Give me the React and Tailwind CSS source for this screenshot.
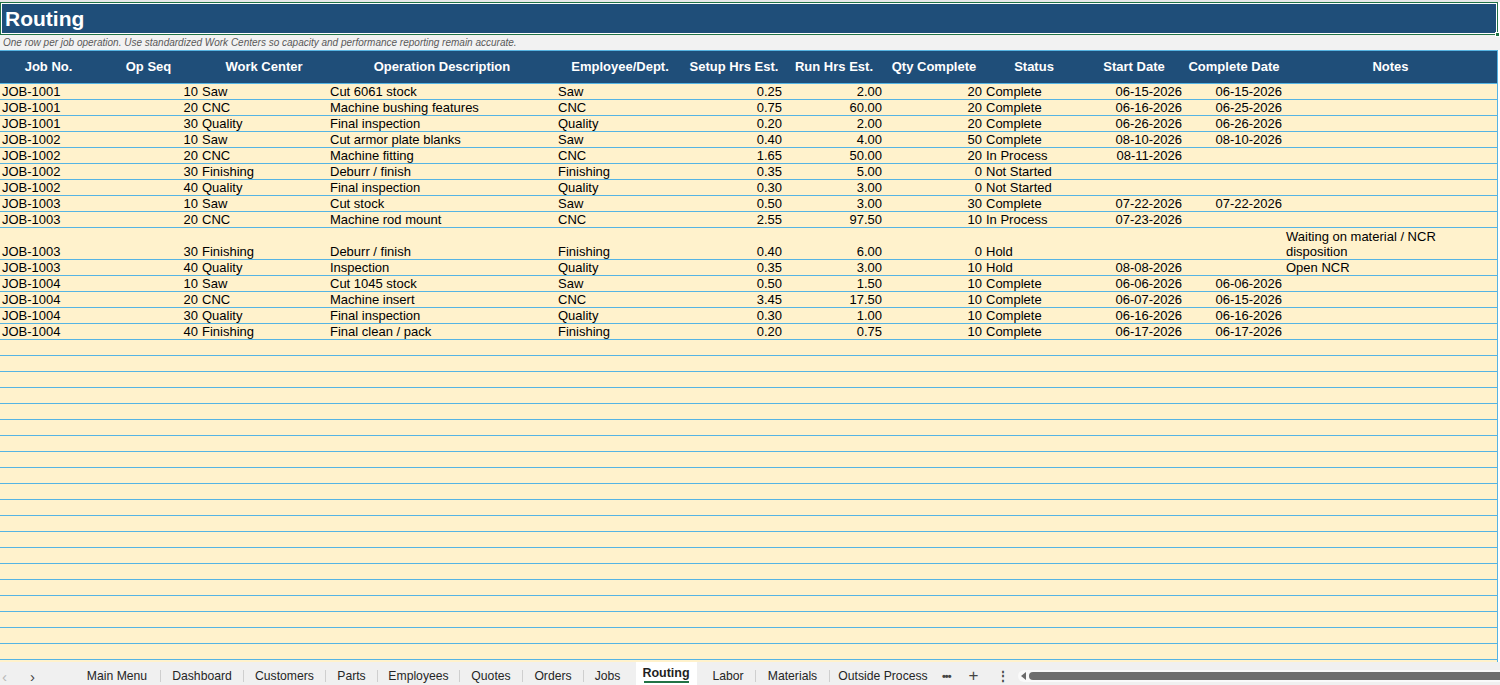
import React from "react";

const COLS = [
  { key: "job", label: "Job No.", align: "left" },
  { key: "seq", label: "Op Seq", align: "right" },
  { key: "wc", label: "Work Center", align: "left" },
  { key: "desc", label: "Operation Description", align: "left" },
  { key: "emp", label: "Employee/Dept.", align: "left" },
  { key: "setup", label: "Setup Hrs Est.", align: "right" },
  { key: "run", label: "Run Hrs Est.", align: "right" },
  { key: "qty", label: "Qty Complete", align: "right" },
  { key: "status", label: "Status", align: "left" },
  { key: "start", label: "Start Date", align: "right" },
  { key: "done", label: "Complete Date", align: "right" },
  { key: "notes", label: "Notes", align: "left" },
];

const r = (job, seq, wc, desc, emp, setup, run, qty, status, start = "", done = "", notes = "") => ({
  job, seq, wc, desc, emp, setup, run, qty, status, start, done, notes,
});

const ROWS = [
  r("JOB-1001", "10", "Saw", "Cut 6061 stock", "Saw", "0.25", "2.00", "20", "Complete", "06-15-2026", "06-15-2026"),
  r("JOB-1001", "20", "CNC", "Machine bushing features", "CNC", "0.75", "60.00", "20", "Complete", "06-16-2026", "06-25-2026"),
  r("JOB-1001", "30", "Quality", "Final inspection", "Quality", "0.20", "2.00", "20", "Complete", "06-26-2026", "06-26-2026"),
  r("JOB-1002", "10", "Saw", "Cut armor plate blanks", "Saw", "0.40", "4.00", "50", "Complete", "08-10-2026", "08-10-2026"),
  r("JOB-1002", "20", "CNC", "Machine fitting", "CNC", "1.65", "50.00", "20", "In Process", "08-11-2026"),
  r("JOB-1002", "30", "Finishing", "Deburr / finish", "Finishing", "0.35", "5.00", "0", "Not Started"),
  r("JOB-1002", "40", "Quality", "Final inspection", "Quality", "0.30", "3.00", "0", "Not Started"),
  r("JOB-1003", "10", "Saw", "Cut stock", "Saw", "0.50", "3.00", "30", "Complete", "07-22-2026", "07-22-2026"),
  r("JOB-1003", "20", "CNC", "Machine rod mount", "CNC", "2.55", "97.50", "10", "In Process", "07-23-2026"),
  r("JOB-1003", "30", "Finishing", "Deburr / finish", "Finishing", "0.40", "6.00", "0", "Hold", "", "", "Waiting on material / NCR disposition"),
  r("JOB-1003", "40", "Quality", "Inspection", "Quality", "0.35", "3.00", "10", "Hold", "08-08-2026", "", "Open NCR"),
  r("JOB-1004", "10", "Saw", "Cut 1045 stock", "Saw", "0.50", "1.50", "10", "Complete", "06-06-2026", "06-06-2026"),
  r("JOB-1004", "20", "CNC", "Machine insert", "CNC", "3.45", "17.50", "10", "Complete", "06-07-2026", "06-15-2026"),
  r("JOB-1004", "30", "Quality", "Final inspection", "Quality", "0.30", "1.00", "10", "Complete", "06-16-2026", "06-16-2026"),
  r("JOB-1004", "40", "Finishing", "Final clean / pack", "Finishing", "0.20", "0.75", "10", "Complete", "06-17-2026", "06-17-2026"),
];

// sheet tabs with their slot widths (text is centred in the slot)
const TABS = [
  { name: "Main Menu", w: "w-[86px]" },
  { name: "Dashboard", w: "w-[82px]" },
  { name: "Customers", w: "w-[81px]" },
  { name: "Parts", w: "w-[51px]" },
  { name: "Employees", w: "w-[81px]" },
  { name: "Quotes", w: "w-[62px]" },
  { name: "Orders", w: "w-[60px]" },
  { name: "Jobs", w: "w-[47px]" },
  { name: "Routing", w: "w-[68px]", active: true },
  { name: "Labor", w: "w-[54px]" },
  { name: "Materials", w: "w-[73px]" },
  { name: "Outside Process", w: "w-[106px]" },
];

const GRID = "grid grid-cols-[97px_103px_128px_228px_128px_100px_100px_100px_100px_100px_100px_213px]";

const App = () => {
  return (
    <div className="w-[1500px] h-[685px] overflow-hidden bg-white flex flex-col font-['Liberation_Sans',Arial,sans-serif] text-black">
      {/* column header remnant strip */}
      <div className="h-[2px] bg-[#e8e8e8]" />

      {/* title cell, selected */}
      <div className="w-[1498px] h-[33px] border border-[#217346] relative">
        <div className="h-full border border-white bg-[#1f4e79] flex items-center pl-[3px]">
          <span className="text-white font-bold text-[21px] leading-none">Routing</span>
        </div>
        <div className="absolute right-[-3px] bottom-[-3px] w-[5px] h-[5px] bg-[#217346] border border-white" />
      </div>

      {/* subtitle */}
      <div className="h-[15px] bg-[#f2f2f2] flex items-center pl-[3px]">
        <span className="italic text-[10px] leading-none text-[#595959]">
          One row per job operation. Use standardized Work Centers so capacity and performance reporting remain accurate.
        </span>
      </div>

      {/* table */}
      <div className="w-[1498px] border-r border-[#56b4e3] flex-1 flex flex-col bg-[#fff2cc]">
        <div className={`${GRID} h-[34px] bg-[#1f4e79] border-t border-b border-[#56b4e3]`}>
          {COLS.map((c) => (
            <div key={c.key} className="flex items-center justify-center text-white font-bold text-[13px] whitespace-nowrap">
              {c.label}
            </div>
          ))}
        </div>

        {ROWS.map((row, i) => {
          const tall = row.notes.length > 20;
          return (
            <div
              key={i}
              className={`${GRID} ${tall ? "h-[32px]" : "h-[16px]"} border-b border-[#56b4e3] text-[13px] leading-[15px]`}
            >
              {COLS.map((c) => (
                <div
                  key={c.key}
                  className={`flex items-end px-[2px] ${
                    c.align === "right" ? "justify-end" : "justify-start"
                  } ${c.key === "notes" ? "whitespace-normal" : "whitespace-nowrap"}`}
                >
                  {row[c.key]}
                </div>
              ))}
            </div>
          );
        })}

        {Array.from({ length: 20 }).map((_, i) => (
          <div key={`e${i}`} className="h-[16px] shrink-0 border-b border-[#56b4e3]" />
        ))}
      </div>

      {/* sheet tabs */}
      <div className="h-[23px] bg-[#f0f0f0] flex items-stretch text-[12.2px] text-[#262626]">
        <div className="w-[74px] flex items-center pt-[5px]">
          <span className="ml-[2px] text-[#b8b8b8] text-[15px] leading-none">&lsaquo;</span>
          <span className="ml-[23px] text-[#444] text-[15px] leading-none">&rsaquo;</span>
        </div>
        {TABS.map((t, i) => {
          const last = i === TABS.length - 1;
          const sepHidden = t.active || TABS[i + 1]?.active || last;
          return (
            <React.Fragment key={t.name}>
              {t.active ? (
                <div className={`${t.w} flex justify-center`}>
                  <div className="bg-white w-[61px] flex flex-col items-center justify-center">
                    <span className="font-bold text-[#1f1f1f] text-[12.5px] leading-[14px] mt-[1px]">{t.name}</span>
                    <span className="w-[45px] h-[2px] bg-[#217346] mt-[1px]" />
                  </div>
                </div>
              ) : (
                <div className={`${t.w} flex items-center justify-center pt-[5px] whitespace-nowrap`}>{t.name}</div>
              )}
              {!last && (
                <div className={`w-px h-[12px] self-center mt-[5px] ${sepHidden ? "bg-transparent" : "bg-[#cfcfcf]"}`} />
              )}
            </React.Fragment>
          );
        })}
        <div className="flex items-center pt-[5px] ml-[6px] text-[#444] text-[11px] tracking-[-1px] font-bold">•••</div>
        <div className="flex items-center pt-[4px] ml-[18px] text-[#444] text-[17px]">+</div>
        <div className="flex items-center pt-[5px] ml-[18px] text-[#444] text-[12px] font-bold">⋮</div>
        <div className="flex-1 flex items-center pt-[5px] ml-[9px]">
          <div className="flex-1 h-[12px] bg-[#fafafa] rounded-l-full flex items-center pl-[3px]">
            <span className="w-0 h-0 border-y-[4px] border-y-transparent border-r-[5px] border-r-[#6b6b6b]" />
            <div className="flex-1 ml-[3px] h-[8px] bg-[#6e6e6e] rounded-l-full" />
          </div>
        </div>
      </div>
    </div>
  );
};

export default App;
